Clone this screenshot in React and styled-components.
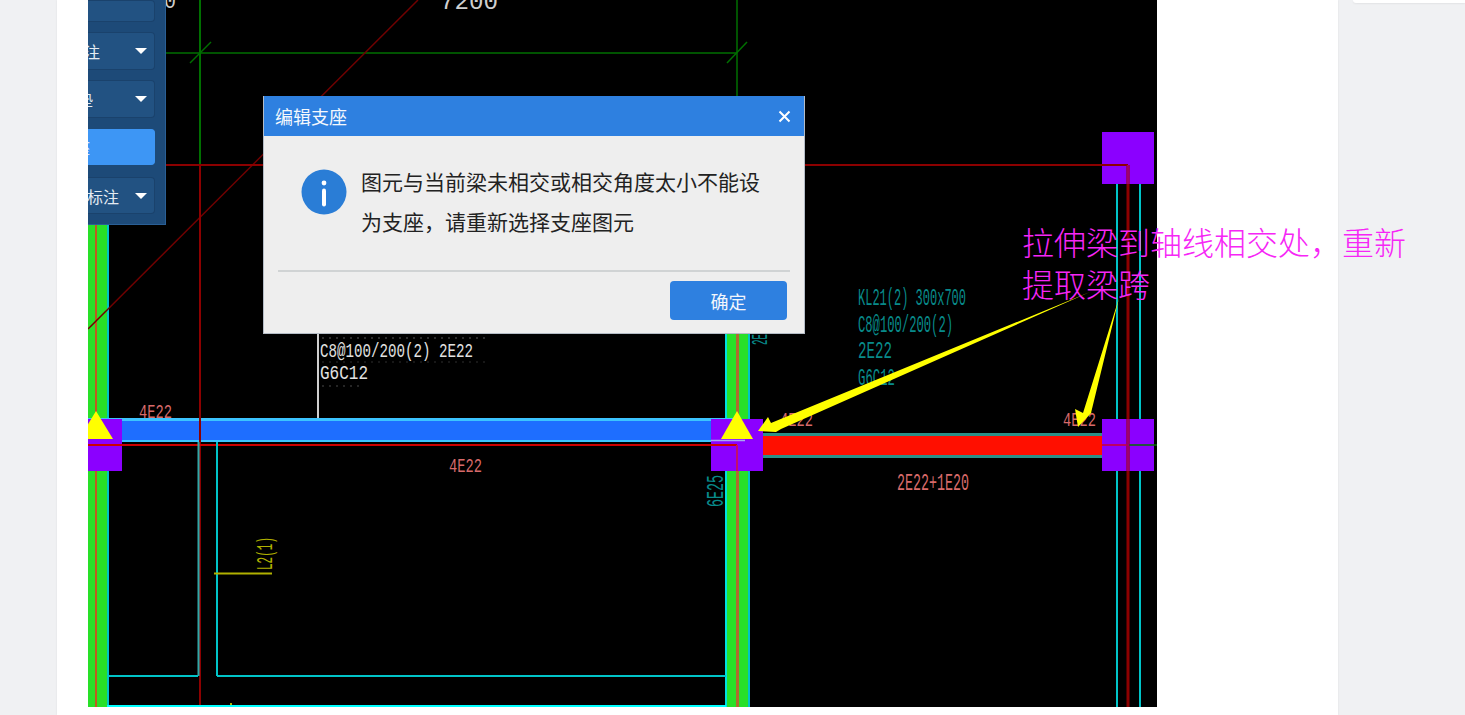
import React from 'react';
import styled, { createGlobalStyle } from 'styled-components';

const CJK = '"Noto Sans CJK SC", "Liberation Sans", sans-serif';

const GlobalStyle = createGlobalStyle`
  html, body {
    margin: 0;
    height: 100%;
    overflow: hidden;
    background: #f0f1f3;
    font-family: ${CJK};
  }
`;

const Page = styled.div`
  display: flex;
  height: 715px;
  padding-left: 57px;
  overflow: hidden;
`;

const Article = styled.main`
  width: 1281px;
  box-sizing: border-box;
  padding-left: 31px;
  background: #fff;
  box-shadow: 0 0 2px rgba(0, 0, 0, 0.08);
`;

const Figure = styled.div`
  position: relative;
  width: 1069px;
  height: 707px;
  background: #000;
`;

const Drawing = styled.svg`
  display: block;
  width: 1069px;
  height: 707px;
`;

const Sidebar = styled.aside`
  flex: 1;
  padding-left: 15px;
`;

const SideCard = styled.div`
  height: 3px;
  background: #fff;
  border-radius: 0 0 0 3px;
  box-shadow: 0 1px 2px rgba(0, 0, 0, 0.06);
`;

const Toolbar = styled.div`
  position: absolute;
  left: 0;
  top: 0;
  width: 78px;
  height: 225px;
  box-sizing: border-box;
  overflow: hidden;
  background: #1d4a78;
  border-right: 1px solid #2a5f95;
  border-bottom: 1px solid #2a5f95;
  display: flex;
  flex-direction: column;
  gap: 10px;
`;

const ToolButton = styled.div`
  flex: none;
  width: 67px;
  height: ${(p) => p.$height}px;
  margin-top: ${(p) => p.$offset || 0}px;
  box-sizing: border-box;
  display: flex;
  align-items: center;
  justify-content: flex-end;
  overflow: hidden;
  padding-right: ${(p) => p.$textRight}px;
  border-radius: 0 4px 4px 0;
  background: ${(p) => (p.$active ? '#3d96f5' : '#225282')};
  border: 1px solid ${(p) => (p.$active ? '#3d96f5' : '#1a426c')};
  border-left: none;
  color: #e4ebf2;
  font-size: 16px;
  white-space: nowrap;
  position: relative;
`;

const Caret = styled.span`
  position: absolute;
  right: 7px;
  top: 50%;
  margin-top: -3px;
  border-left: 6px solid transparent;
  border-right: 6px solid transparent;
  border-top: 6px solid #fff;
`;

const Dialog = styled.div`
  position: absolute;
  left: 175px;
  top: 96px;
  width: 542px;
  height: 238px;
  box-sizing: border-box;
  display: flex;
  flex-direction: column;
  background: #eee;
  border: 1px solid #b4bcc6;
  border-top: none;
`;

const DialogHeader = styled.div`
  flex: none;
  height: 40px;
  display: flex;
  align-items: center;
  justify-content: space-between;
  padding: 0 13px 0 11px;
  background: #2e80e0;
  color: #f4f8fd;
  font-size: 18px;
`;

const CloseIcon = styled.svg`
  width: 13px;
  height: 13px;
  display: block;
`;

const DialogBody = styled.div`
  flex: none;
  height: 134px;
  box-sizing: border-box;
  display: flex;
  gap: 14px;
  padding: 26px 20px 0 37px;
`;

const InfoIcon = styled.svg`
  flex: none;
  width: 46px;
  height: 46px;
  margin-top: 7px;
`;

const Message = styled.p`
  margin: 0;
  width: 400px;
  color: #222;
  font-size: 21px;
  line-height: 39.5px;
`;

const Divider = styled.div`
  height: 2px;
  margin: 0 14px;
  background: #d0d3d4;
`;

const DialogFooter = styled.div`
  display: flex;
  justify-content: flex-end;
  padding: 9px 17px 0 0;
`;

const OkButton = styled.div`
  width: 117px;
  height: 39px;
  display: flex;
  align-items: center;
  justify-content: center;
  border-radius: 4px;
  background: #2e80e0;
  color: #f2f6fc;
  font-size: 18px;
`;

const Note = styled.div`
  position: absolute;
  left: 934px;
  top: 220px;
  width: 400px;
  color: #f626f6;
  font-size: 32px;
  font-weight: 300;
  line-height: 42px;
`;

const DARK_RED = '#8c0000';
const DARK_GREEN = '#006f00';
const CYAN = '#00c4c8';
const PURPLE = '#8b00ff';
const RED_TEXT = '#d86a6a';
const TEAL_TEXT = '#088a8a';
const WHITE_TEXT = '#e2e2e2';

const rects = [
  // columns
  [88, 225, 19, 482, '#28e028'],
  [95, 225, 2, 482, '#c05a20'],
  [107, 225, 2, 482, CYAN],
  [725, 334, 2, 373, '#00e0e0'],
  [727, 334, 22, 373, '#28e028'],
  [736, 334, 3, 373, '#b06a30'],
  [748, 334, 2, 373, CYAN],
  // blue beam
  [88, 418, 650, 24, '#3cc4ff'],
  [88, 421, 650, 19, '#1e6eff'],
  // red beam
  [749, 433, 355, 25, '#2a9088'],
  [749, 436, 355, 19, '#ff0f00'],
  // purple supports
  [88, 419, 34, 52, PURPLE],
  [711, 419, 52, 52, PURPLE],
  [1102, 132, 52, 52, PURPLE],
  [1102, 419, 52, 52, PURPLE],
];

const lines = [
  // axis dimensions
  [166, 53, 737, 53, DARK_GREEN, 1.5],
  [200, 0, 200, 165, DARK_GREEN, 2],
  [737, 0, 737, 96, DARK_GREEN, 1.5],
  [190, 63, 211, 42, DARK_GREEN, 1.5],
  [727, 63, 747, 42, DARK_GREEN, 1.5],
  // axis
  [88, 329, 418, 0, '#700000', 1.5],
  [166, 165, 1128, 165, DARK_RED, 2],
  [200, 165, 200, 707, DARK_RED, 2],
  [1128, 165, 1128, 707, DARK_RED, 3],
  [88, 445, 737, 445, '#cc0000', 2],
  [711, 440.5, 745, 440.5, '#a8a8f0', 1.5],
  [737, 445, 737, 471, '#c0106c', 2],
  [1102, 445, 1128, 445, '#cc0030', 1.5],
  [1128, 445, 1157, 445, DARK_GREEN, 1.5],
  [1128, 419, 1128, 471, '#a0006a', 2.5],
  [1128, 165, 1128, 184, '#a0006a', 2.5],
  // beam edges
  [198.5, 442, 198.5, 676, '#30a8a8', 2],
  [217, 442, 217, 676, CYAN, 2],
  [107, 676, 198, 676, CYAN, 2],
  [217, 676, 726, 676, CYAN, 2],
  [107, 706, 726, 706, '#00ffff', 2],
  [1117, 184, 1117, 419, CYAN, 2],
  [1117, 471, 1117, 707, CYAN, 2],
  [1140, 184, 1140, 419, CYAN, 2],
  [1140, 471, 1140, 707, CYAN, 2],
  // leaders
  [318, 334, 318, 418, '#cfcfcf', 2],
  [214, 573.5, 272, 573.5, '#b0b000', 2],
  [231, 703, 231, 705, '#b0b000', 2],
];

// broken scraps of the text rows around the white label
const scraps = [
  [322, 338, 490, 338, '#5a5a5a'],
  [322, 362, 490, 362, '#2e2e2e'],
  [322, 386, 362, 386, '#4a4a4a'],
];

const labels = [
  ['7200', 440, 9, 58, 24, '#cfcfcf'],
  ['0', 164, 8, 12, 22, '#cfcfcf'],
  ['4E22', 139, 418, 33, 21, RED_TEXT],
  ['4E22', 449, 472, 33, 21, RED_TEXT],
  ['4E22', 780, 426, 33, 21, RED_TEXT],
  ['4E22', 1063, 426, 33, 21, RED_TEXT],
  ['2E22+1E20', 897, 490, 72, 23, RED_TEXT],
  ['KL21(2) 300x700', 858, 305, 108, 24, TEAL_TEXT],
  ['C8@100/200(2)', 858, 332, 95, 24, TEAL_TEXT],
  ['2E22', 858, 358, 34, 24, TEAL_TEXT],
  ['G6C12', 858, 385, 37, 24, TEAL_TEXT],
  ['C8@100/200(2) 2E22', 320, 357, 153, 20, WHITE_TEXT],
  ['G6C12', 320, 379, 48, 20, WHITE_TEXT],
];

const rotatedLabels = [
  ['6E25', 723, 507, 32, 24, TEAL_TEXT],
  ['2E', 767, 345, 11, 22, TEAL_TEXT],
  ['L2(1)', 272, 570, 33, 22, '#b0b000'],
];

const triangles = [
  '96,411 79,439 113,439',
  '737,411 721,439 753,439',
];

const arrows = [
  '758,431 768,417 771,423 1090,292 781,429 776,432',
  '1078,427 1075,409 1083,413 1119,298 1091,413 1094,410',
];

const CadText = ({ x, y, length, size, color, children, rotate }) => (
  <text
    x={x}
    y={y}
    fill={color}
    fontFamily='"Liberation Mono", monospace'
    fontSize={size}
    textLength={length}
    lengthAdjust="spacingAndGlyphs"
    transform={rotate ? `rotate(-90 ${x} ${y})` : undefined}
  >
    {children}
  </text>
);

const toolButtons = [
  { text: '重提梁跨', height: 22, textRight: 66 },
  { text: '原位标注', height: 38, textRight: 54, caret: true },
  { text: '设置梁垫', height: 38, textRight: 61, caret: true },
  { text: '编辑支座', height: 36, textRight: 64, active: true, offset: 1 },
  { text: '查改标注', height: 37, textRight: 35, caret: true, offset: 2 },
];

const App = () => (
  <>
    <GlobalStyle />
    <Page>
      <Article>
        <Figure>
          <Drawing viewBox="88 0 1069 707">
            {rects.map(([x, y, width, height, fill]) => (
              <rect key={`${x}-${y}-${fill}`} x={x} y={y} width={width} height={height} fill={fill} />
            ))}
            {lines.map(([x1, y1, x2, y2, stroke, strokeWidth]) => (
              <line
                key={`${x1}-${y1}-${x2}-${y2}`}
                x1={x1}
                y1={y1}
                x2={x2}
                y2={y2}
                stroke={stroke}
                strokeWidth={strokeWidth}
              />
            ))}
            {scraps.map(([x1, y1, x2, y2, stroke]) => (
              <line key={y1} x1={x1} y1={y1} x2={x2} y2={y2} stroke={stroke} strokeDasharray="2 5" />
            ))}
            {labels.map(([text, x, y, length, size, color]) => (
              <CadText key={`${text}-${x}`} x={x} y={y} length={length} size={size} color={color}>
                {text}
              </CadText>
            ))}
            {rotatedLabels.map(([text, x, y, length, size, color]) => (
              <CadText key={text} x={x} y={y} length={length} size={size} color={color} rotate>
                {text}
              </CadText>
            ))}
            {triangles.map((points) => (
              <polygon key={points} points={points} fill="#ffff00" />
            ))}
            {arrows.map((points) => (
              <polygon key={points} points={points} fill="#ffff00" />
            ))}
          </Drawing>

          <Toolbar>
            {toolButtons.map((b) => (
              <ToolButton
                key={b.text}
                $height={b.height}
                $textRight={b.textRight}
                $offset={b.offset}
                $active={b.active}
              >
                {b.text}
                {b.caret && <Caret />}
              </ToolButton>
            ))}
          </Toolbar>

          <Dialog>
            <DialogHeader>
              编辑支座
              <CloseIcon viewBox="0 0 13 13">
                <path d="M1.5 1.5 L11.5 11.5 M11.5 1.5 L1.5 11.5" stroke="#fff" strokeWidth="2" />
              </CloseIcon>
            </DialogHeader>
            <DialogBody>
              <InfoIcon viewBox="0 0 46 46">
                <circle cx="23" cy="23" r="22.5" fill="#2a7dd6" />
                <circle cx="23" cy="14" r="2.4" fill="#fff" />
                <rect x="21" y="19.5" width="4" height="18" rx="2" fill="#fff" />
              </InfoIcon>
              <Message>
                图元与当前梁未相交或相交角度太小不能设为支座，请重新选择支座图元
              </Message>
            </DialogBody>
            <Divider />
            <DialogFooter>
              <OkButton>确定</OkButton>
            </DialogFooter>
          </Dialog>

          <Note>拉伸梁到轴线相交处，重新提取梁跨</Note>
        </Figure>
      </Article>
      <Sidebar>
        <SideCard />
      </Sidebar>
    </Page>
  </>
);

export default App;
